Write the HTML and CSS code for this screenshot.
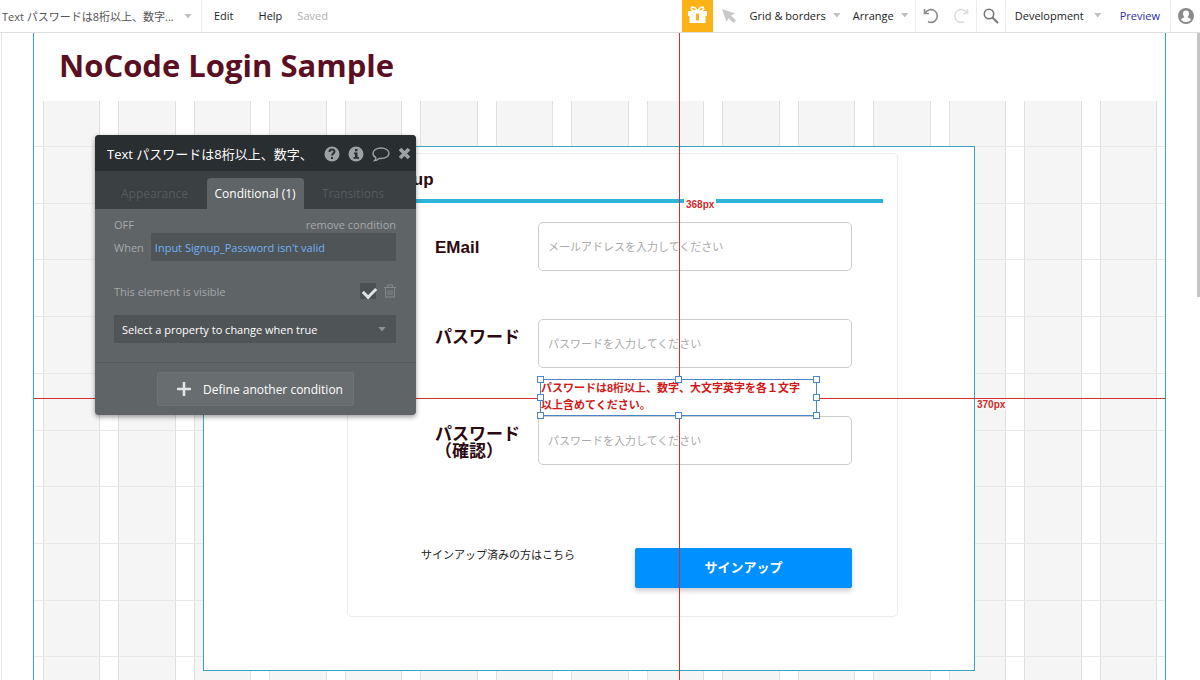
FILE: index.html
```html
<!doctype html>
<html lang="ja">
<head>
	<title>NoCode Login Sample - Editor</title>
	<meta charset="utf-8">
	<link rel="stylesheet" href="styles.css">
</head>

<body>

	<header class="toolbar">
		<button class="element_picker"><span class="picker_name">Text パスワードは8桁以上、数字...</span><span class="arrow"></span></button>
		<nav class="menu">
			<button>Edit</button>
			<button>Help</button>
			<span class="saved">Saved</span>
		</nav>
		<div class="tools">
			<button class="gift" aria-label="Gift">
				<svg width="21" height="20" viewBox="0 0 21 20">
					<path d="M10 5C4 6 3 1 6 1c2 0 3 2 4.500 4C12 3 13 1 15 1c3 0 2 5-4 4" fill="none" stroke="#fff" stroke-width="1.600"/>
					<path d="M1 5h19v5H1zM2.500 10h16v7h-16z" fill="#fff"/>
					<path d="M8.500 7h4v8h-4z" fill="#fbb216" stroke="#fff"/>
				</svg>
			</button>
			<button class="pointer" aria-label="Select">
				<svg width="14" height="14" viewBox="0 0 14 14"><path d="M0 0l13 4.500-4 2 5 5-2.500 2.500-5-5-2 4z" fill="#c9c9c9"/></svg>
			</button>
			<button class="drop">Grid &amp; borders<span class="arrow"></span></button>
			<button class="drop">Arrange<span class="arrow"></span></button>
		</div>
		<div class="history">
			<button aria-label="Undo">
				<svg width="16" height="16" viewBox="0 0 16 16" fill="none" stroke="#8b8b8b" stroke-width="1.600"><path d="M1.500 1v4.500H6M2 5.300C4 1.500 9 .5 12 3c3 2.500 3 7.500 0 10-2 1.500-4.500 1.800-7 .7"/></svg>
			</button>
			<button aria-label="Redo">
				<svg width="16" height="16" viewBox="0 0 16 16" fill="none" stroke="#dedede" stroke-width="1.600"><path d="M14.500 1v4.500H10M14 5.300C12 1.500 7 .5 4 3c-3 2.500-3 7.500 0 10 2 1.500 4.500 1.800 7 .7"/></svg>
			</button>
		</div>
		<button class="search" aria-label="Search">
			<svg width="16" height="16" viewBox="0 0 16 16" fill="none" stroke="#777"><circle cx="6" cy="6" r="4.700" stroke-width="1.600"/><path d="M9.500 9.500l5.500 5.500" stroke-width="2"/></svg>
		</button>
		<div class="deploy">
			<button class="drop">Development<span class="arrow"></span></button>
			<a class="preview" href="#">Preview</a>
		</div>
		<button class="account" aria-label="Account">
			<svg width="16" height="16" viewBox="0 0 16 16"><circle cx="8" cy="8" r="8" fill="#8b8b8b"/><path d="M8 2.500c-2 0-3 1.300-3 3 0 1.500.6 2.700 1.500 3.500-.2 1-3 1-3.500 2.800C4.500 13.500 6 14 8 14s3.500-.5 5-2.200c-.5-1.800-3.300-1.800-3.500-2.800C10.400 8.200 11 7 11 5.500c0-1.700-1-3-3-3z" fill="#fff"/></svg>
		</button>
	</header>

	<main class="workspace">
		<div class="page">
			<h1>NoCode Login Sample</h1>

			<div class="canvas">
				<div class="grid_columns">
					<i></i><i></i><i></i><i></i><i></i><i></i><i></i><i></i><i></i><i></i><i></i><i></i><i></i><i></i><i></i>
				</div>
				<div class="grid_rows">
					<i></i><i></i><i></i><i></i><i></i><i></i><i></i><i></i><i></i><i></i>
				</div>

				<section class="popup">
					<form class="signup">
						<h2>Signup</h2>
						<div class="fields">
							<label for="email">EMail</label>
							<input type="email" id="email" placeholder="メールアドレスを入力してください">

							<label for="password">パスワード</label>
							<input type="password" id="password" placeholder="パスワードを入力してください">

							<label for="confirm">パスワード<br>（確認）</label>
							<input type="password" id="confirm" placeholder="パスワードを入力してください">

							<div class="selected">
								パスワードは8桁以上、数字、大文字英字を各１文字以上含めてください。
								<span class="guide up"></span>
								<span class="guide down"></span>
								<span class="guide left"></span>
								<span class="guide right"></span>
								<b class="distance from_top">368px</b>
								<b class="distance from_right">370px</b>
								<span class="handles"><i></i><i></i><i></i><i></i><i class="none"></i><i></i><i></i><i></i><i></i></span>
							</div>
						</div>
						<div class="actions">
							<a href="#">サインアップ済みの方はこちら</a>
							<button type="button">サインアップ</button>
						</div>
					</form>
				</section>
			</div>
		</div>
		<div class="scrollbar"></div>

		<!-- property editor -->
		<aside class="editor">
			<div class="editor_head">
				<span class="editor_title">Text パスワードは8桁以上、数字、</span>
				<button aria-label="Help"><svg width="16" height="16" viewBox="0 0 16 16"><circle cx="8" cy="8" r="7.500" fill="#9da1a3"/><path d="M5.500 6c0-3.300 5-3 5-.4C10.500 7.500 8 7.500 8 9.500M8 11v2" fill="none" stroke="#292e30" stroke-width="2"/></svg></button>
				<button aria-label="Info"><svg width="16" height="16" viewBox="0 0 16 16"><circle cx="8" cy="8" r="7.500" fill="#9da1a3"/><path d="M7 3h2.500v2.200H7zM6 6.500h3.500V11H11v1.800H5.500V11H7V8.300H6z" fill="#292e30"/></svg></button>
				<button aria-label="Comment"><svg width="18" height="16" viewBox="0 0 18 16"><path d="M9 2c4.500 0 8 2.200 8 5.200s-3.500 5.300-8 5.300l-2-.1c-1.300 1.200-2.700 2-4.300 2.200.8-.8 1.200-1.700 1.200-2.900C2 10.700 1 9.200 1 7.200 1 4.200 4.500 2 9 2z" fill="none" stroke="#9da1a3" stroke-width="1.400"/></svg></button>
				<button aria-label="Close"><svg width="13" height="13" viewBox="0 0 13 13"><path d="M2 2l9 9M11 2l-9 9" stroke="#9da1a3" stroke-width="3.600"/></svg></button>
			</div>
			<div class="tabs">
				<button>Appearance</button>
				<button class="active">Conditional (1)</button>
				<button>Transitions</button>
			</div>
			<div class="condition">
				<div class="line">
					<span>OFF</span>
					<a href="#">remove condition</a>
				</div>
				<div class="line when">
					<span>When</span>
					<button class="expression">Input Signup_Password isn't valid</button>
				</div>
				<div class="line visible">
					<label for="isVisible">This element is visible</label>
					<input type="checkbox" id="isVisible" checked>
					<button class="trash" aria-label="Delete"><svg width="12" height="14" viewBox="0 0 12 14" fill="none" stroke="#85898c"><path d="M0 3.500h12M3.500 3V1h5v2M1.500 3.500v9.500h9V3.500M4 6v5M6 6v5M8 6v5"/></svg></button>
				</div>
				<div class="property">
					<select aria-label="Property">
						<option>Select a property to change when true</option>
					</select>
					<span class="arrow"></span>
				</div>
			</div>
			<div class="editor_foot">
				<button><svg width="14" height="14" viewBox="0 0 14 14"><path d="M7 0v14M0 7h14" stroke="#e2e3e3" stroke-width="2.600"/></svg>Define another condition</button>
			</div>
		</aside>
	</main>

</body>
</html>
```
FILE: styles.css
```css
*{
	box-sizing: border-box;
}
body{
	margin: 0;
	height: 100vh;
	display: flex;
	flex-direction: column;
	overflow: hidden;
	font-family: "Open Sans", "Noto Sans CJK JP", sans-serif;
	font-size: 11px;
	color: #222;
	background: #fff;
}
button{
	margin: 0;
	padding: 0;
	border: 0;
	background: none;
	font: inherit;
	color: inherit;
	cursor: pointer;
}
a{
	color: inherit;
	text-decoration: none;
}
svg{
	display: block;
}
.arrow{
	flex: none;
	width: 8px;
	height: 5px;
	background: #bcc2c5;
	clip-path: polygon(0 0, 100% 0, 50% 100%);
}

/* toolbar */
.toolbar{
	flex: none;
	display: flex;
	height: 33px;
	border-bottom: 1px solid #dedede;
}
.toolbar button,.toolbar nav,.toolbar div{
	display: flex;
	align-items: center;
}
.element_picker{
	width: 202px;
	gap: 5px;
	border-right: 1px solid #eee;
	color: #555;
}
.toolbar .element_picker{
	padding: 0 9px 0 2px;
}
.picker_name{
	flex: 1;
	overflow: hidden;
	white-space: nowrap;
	text-align: left;
}
.menu{
	gap: 25px;
	padding: 0 0 2px 12px;
}
.saved{
	margin-left: -10px;
	color: #b0b0b0;
}
.tools{
	margin-left: auto;
	padding-right: 6px;
	border-right: 1px solid #eee;
}
.toolbar .gift{
	align-self: stretch;
	width: 31px;
	justify-content: center;
	background: #fbb216;
}
.toolbar .pointer{
	padding: 0 14px 0 9px;
}
.toolbar .drop{
	gap: 7px;
	padding-bottom: 2px;
}
.drop + .drop{
	margin-left: 12px;
}
.history{
	width: 61px;
	gap: 14px;
	justify-content: center;
	border-right: 1px solid #eee;
}
.toolbar .search{
	width: 29px;
	justify-content: center;
	border-right: 1px solid #eee;
}
.deploy{
	gap: 18px;
	padding: 0 10px 0 9px;
	border-right: 1px solid #eee;
}
.toolbar .deploy .drop{
	gap: 10px;
}
.preview{
	padding-bottom: 2px;
	color: #2c2caa;
}
.account{
	width: 29px;
	justify-content: center;
}

/* page being edited */
.workspace{
	position: relative;
	flex: 1;
	min-height: 0;
	display: flex;
	margin-left: 1px;
	border-left: 1px solid #e4e4e4;
}
.page{
	flex: 1;
	display: flex;
	flex-direction: column;
	margin: 0 31px 0 31px;
	border-left: 1px solid #3ba5c0;
	border-right: 1px solid #3ba5c0;
	overflow: hidden;
}
.scrollbar{
	width: 3px;
	height: 264px;
	background: #c4c4c4;
}
h1{
	flex: none;
	height: 68px;
	margin: 0;
	padding-left: 25px;
	font-size: 31px;
	line-height: 64px;
	color: #5b0f22;
}
.canvas{
	position: relative;
	flex: 1;
	min-height: 0;
	padding: 45px 0 0 169px;
}
.grid_columns{
	position: absolute;
	inset: 0 8px 0 9px;
	display: flex;
	gap: 18px;
}
.grid_columns i{
	flex: 1;
	border: solid #e0e0e0;
	border-width: 0 1px;
	background: #f5f5f5;
}
.grid_rows{
	position: absolute;
	top: 45px;
	left: 0;
	right: 0;
	height: 567px;
	display: flex;
	flex-direction: column;
}
.grid_rows i{
	flex: 1;
	border-top: 1px solid #e8e8e8;
}
.popup{
	position: relative;
	width: 772px;
	padding: 6px 76px 53px 143px;
	border: 1px solid #3ba5c0;
	background: #fff;
}
.signup{
	padding: 14px 14px 28px 14px;
	border: 1px solid #ececec;
	border-radius: 5px;
	font-family: "Liberation Sans", "Noto Sans CJK JP", sans-serif;
}
h2{
	margin: 0;
	padding: 0 0 7px 14px;
	border-bottom: 4px solid #2cb5d8;
	font-size: 17px;
	line-height: 24px;
	color: #2c0a10;
}
.fields{
	display: grid;
	grid-template-columns: 103px 1fr;
	row-gap: 48px;
	padding: 19px 31px 0 73px;
}
.fields label{
	padding-top: 10px;
	font-size: 17px;
	font-weight: bold;
	line-height: 17px;
	color: #2c0a10;
	white-space: nowrap;
}
.fields label:first-child{
	padding-top: 17px;
}
.fields input{
	height: 49px;
	min-width: 0;
	padding: 0 9px;
	border: 1px solid #ccc;
	border-radius: 5px;
	background: #fff;
	font: 11px "Liberation Sans", "Noto Sans CJK JP", sans-serif;
}
.fields input::placeholder{
	color: #aaa;
}
/* the message sits over the gap between the two password boxes */
.selected{
	position: relative;
	grid-column: 2;
	grid-row: 3;
	align-self: start;
	width: 277px;
	height: 37px;
	margin: -37px 0 0 2px;
	padding-right: 8px;
	border: 1px solid #4a86c8;
	font-size: 11px;
	font-weight: bold;
	line-height: 17px;
	color: #d01818;
}
#confirm{
	grid-column: 2;
	grid-row: 3;
}
.guide{
	position: absolute;
	background: #d03030;
}
.guide.up,.guide.down{
	left: 50%;
	width: 1px;
	height: 600px;
}
.guide.up{
	bottom: 100%;
}
.guide.down{
	top: 100%;
}
.guide.left,.guide.right{
	top: 50%;
	width: 1200px;
	height: 1px;
}
.guide.left{
	right: 100%;
}
.guide.right{
	left: 100%;
}
.distance{
	position: absolute;
	padding: 0 2px;
	background: #fff;
	font-size: 10px;
	line-height: 11px;
	color: #c62d2d;
}
.from_top{
	left: 143px;
	bottom: 205px;
}
.from_right{
	left: 434px;
	top: 19px;
	background: #f7f7f7;
}
.handles{
	position: absolute;
	inset: -4px;
	display: grid;
	grid-template-columns: repeat(3, 7px);
	justify-content: space-between;
	align-content: space-between;
}
.handles i{
	height: 7px;
	border: 1px solid #4a86c8;
	background: #fff;
}
.handles .none{
	visibility: hidden;
}
.actions{
	display: flex;
	justify-content: space-between;
	align-items: flex-start;
	padding: 83px 31px 0 59px;
}
.actions a{
	font-size: 11px;
	line-height: 14px;
	color: #222;
}
.actions button{
	width: 217px;
	height: 40px;
	padding-bottom: 4px;
	border-radius: 2px;
	background: #0090ff;
	box-shadow: 0 3px 5px rgba(0,0,0,0.2);
	font-size: 13px;
	font-weight: bold;
	color: #fff;
}

/* property editor window */
.editor{
	position: absolute;
	top: 102px;
	left: 93px;
	width: 321px;
	border-radius: 4px;
	overflow: hidden;
	background: #5f6467;
	box-shadow: 0 2px 5px rgba(0,0,0,0.4);
	color: #a5a9ab;
}
.editor_head{
	display: flex;
	align-items: center;
	gap: 8px;
	height: 36px;
	padding: 1px 5px 0 12px;
	background: #292e30;
}
.editor_title{
	flex: 1;
	overflow: hidden;
	white-space: nowrap;
	font-size: 13px;
	color: #fff;
}
.tabs{
	display: flex;
	justify-content: space-between;
	height: 38px;
	padding: 7px 16px 0 10px;
	background: #3b4042;
}
.tabs button{
	padding: 0 16px;
	border-radius: 4px 4px 0 0;
	font-size: 12px;
	color: #565b5e;
}
.tabs .active{
	padding: 0 8px;
	background: #5f6467;
	color: #fff;
}
.condition{
	padding: 6px 20px 19px 19px;
	border-bottom: 1px solid #565b5e;
}
.line{
	display: flex;
	align-items: center;
	justify-content: space-between;
	height: 18px;
}
.line.when{
	height: 28px;
	gap: 7px;
}
.expression{
	flex: 1;
	align-self: stretch;
	text-align: left;
	color: #6fb0f5;
}
.when .expression{
	padding: 0 4px;
	background: #4f5457;
}
.line.visible{
	gap: 8px;
	margin: 19px 0 13px 0;
	height: 22px;
}
.visible label{
	flex: 1;
}
.visible input{
	appearance: none;
	width: 16px;
	height: 16px;
	margin: 0;
	background: #4b5053;
}
.visible input:checked::before{
	content: "";
	display: block;
	width: 10px;
	height: 6px;
	margin: 4px 0 0 3px;
	border: solid #dfe1e2;
	border-width: 0 0 3px 3px;
	transform: rotate(-45deg);
}
.property{
	display: grid;
	align-items: center;
}
.property select,.property .arrow{
	grid-area: 1 / 1;
}
.property .arrow{
	justify-self: end;
	margin-right: 10px;
	background: #8d9295;
	pointer-events: none;
}
.property select{
	appearance: none;
	height: 28px;
	padding: 0 8px;
	border: 0;
	border-radius: 0;
	background: #4f5457;
	font: inherit;
	color: #fff;
}
.editor_foot{
	display: flex;
	justify-content: center;
	padding: 9px 0;
}
.editor_foot button{
	display: flex;
	align-items: center;
	gap: 12px;
	height: 34px;
	padding: 0 10px 0 19px;
	border: 1px solid #6e7376;
	border-radius: 2px;
	background: #686d70;
	font-size: 12px;
	color: #fff;
}
```
